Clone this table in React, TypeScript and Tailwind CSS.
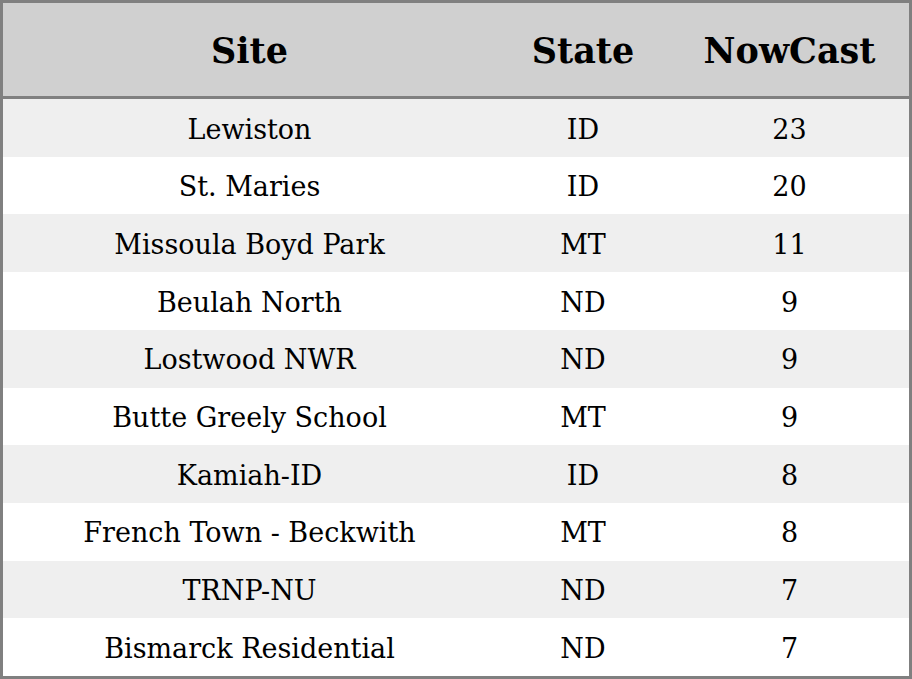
const rows: [string, string, number][] = [
  ["Lewiston", "ID", 23],
  ["St. Maries", "ID", 20],
  ["Missoula Boyd Park", "MT", 11],
  ["Beulah North", "ND", 9],
  ["Lostwood NWR", "ND", 9],
  ["Butte Greely School", "MT", 9],
  ["Kamiah-ID", "ID", 8],
  ["French Town - Beckwith", "MT", 8],
  ["TRNP-NU", "ND", 7],
  ["Bismarck Residential", "ND", 7],
];

export default function App() {
  return (
    <div className="w-[912px] h-[679px] bg-white font-['DejaVu_Serif',serif] text-black">
      <div className="flex h-full flex-col border-[3px] border-[#808080]">
        <div className="flex h-[96px] shrink-0 items-center border-b-[3px] border-[#808080] bg-[#d0d0d0] pt-[3px] text-[35px] font-bold">
          <div className="w-[493px] text-center">Site</div>
          <div className="w-[174px] text-center">State</div>
          <div className="flex-1 text-center">NowCast</div>
        </div>
        <div className="grid flex-1 grid-rows-10">
          {rows.map(([site, state, value], i) => (
            <div
              key={site}
              className={
                "flex items-center pt-[4px] text-[27px] " +
                (i % 2 === 0 ? "bg-[#efefef]" : "bg-white")
              }
            >
              <div className="w-[493px] text-center">{site}</div>
              <div className="w-[174px] text-center">{state}</div>
              <div className="flex-1 text-center">{value}</div>
            </div>
          ))}
        </div>
      </div>
    </div>
  );
}
